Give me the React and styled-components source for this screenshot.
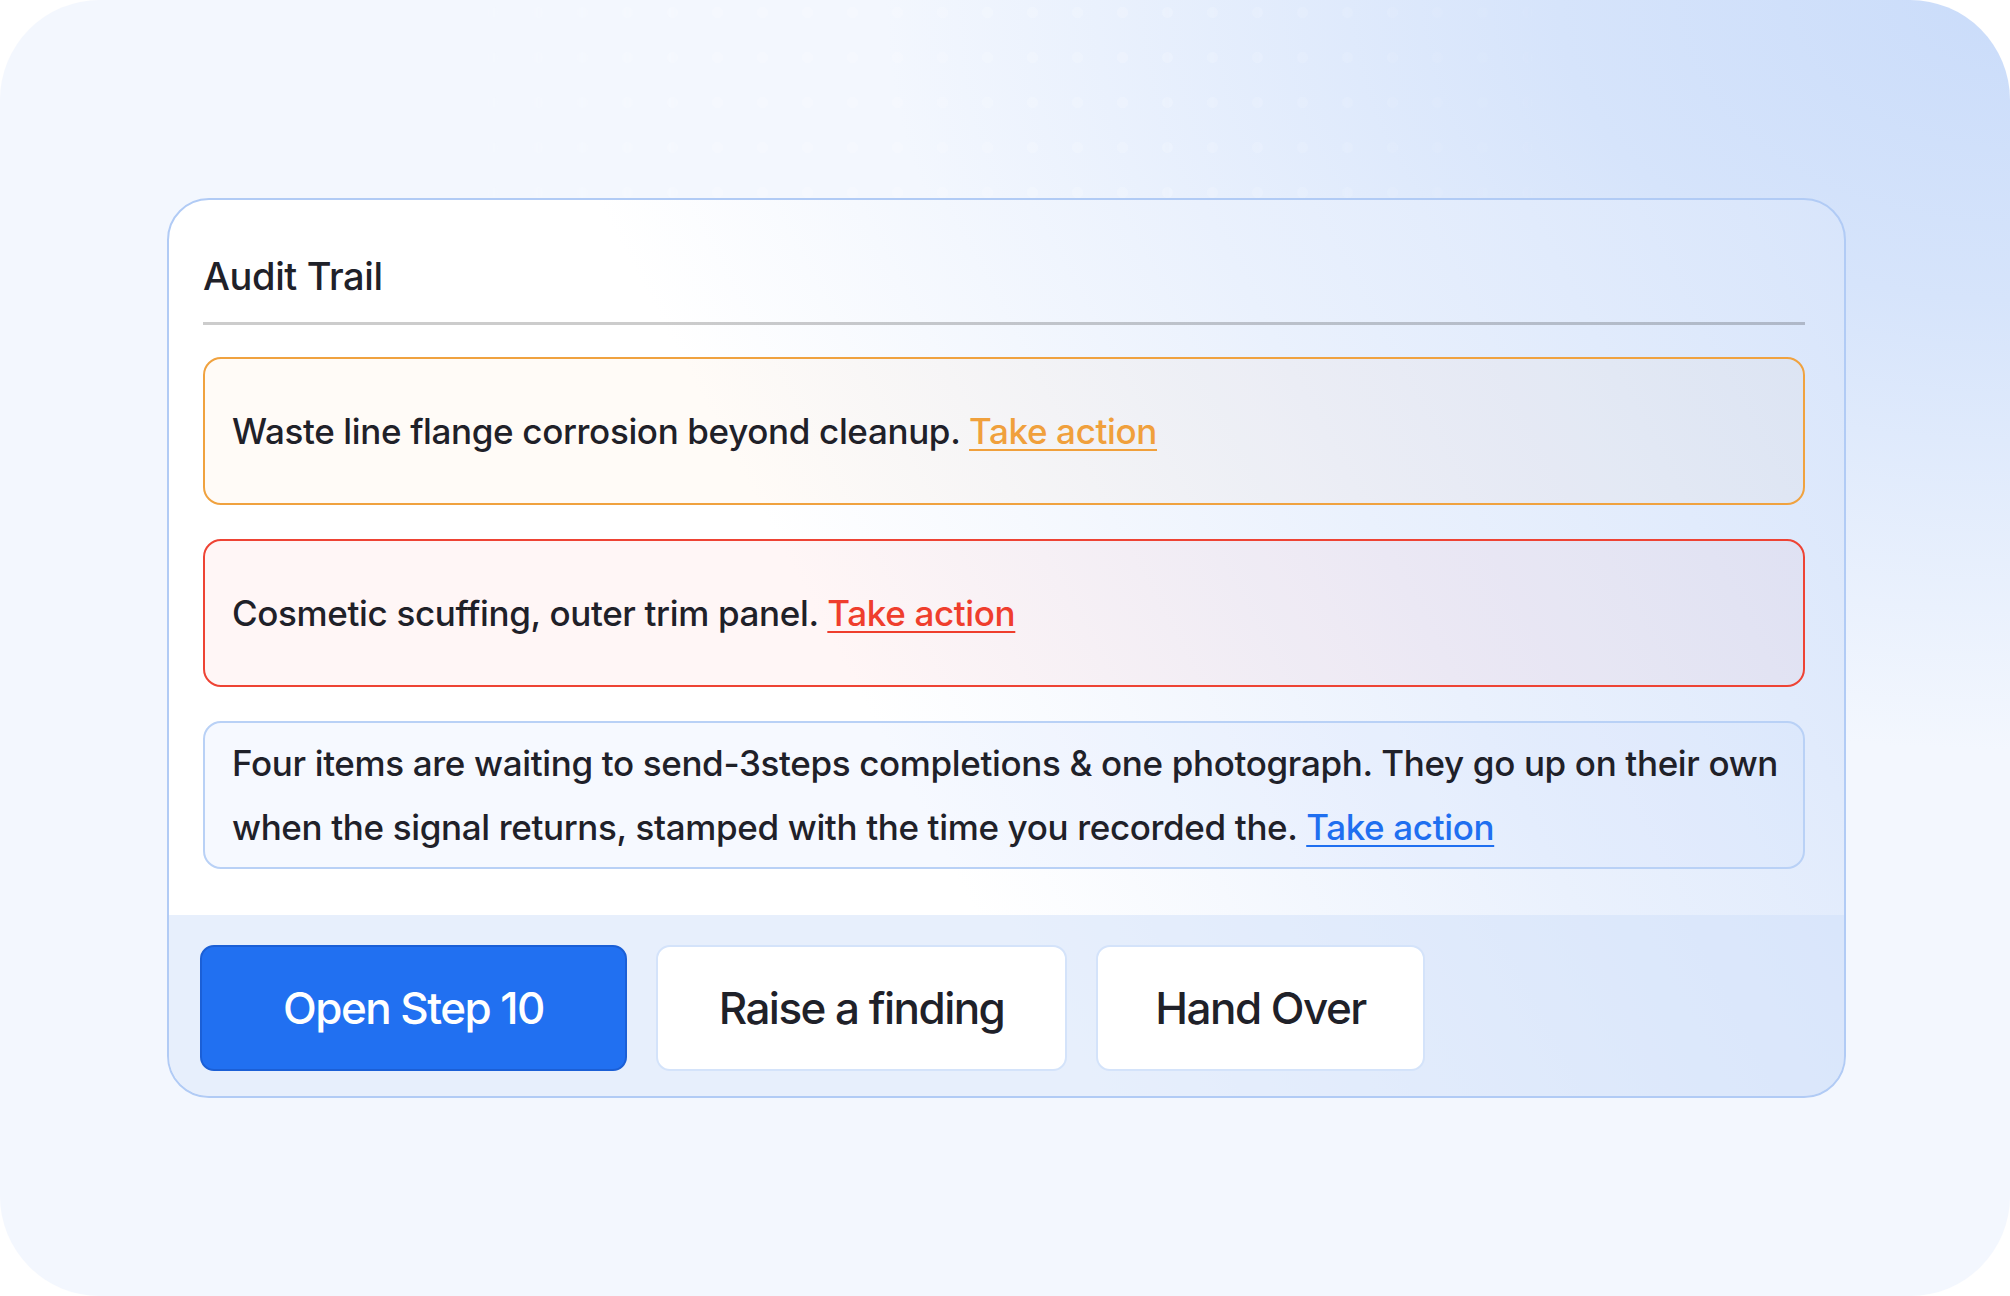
import React from "react";
import styled, { createGlobalStyle } from "styled-components";

const TONES = {
  warn: {
    line: "#f0a23f",
    link: "#f0a03c",
    tint: "rgba(252, 176, 90, 0.05)",
  },
  danger: {
    line: "#ee4334",
    link: "#ef3e2d",
    tint: "rgba(250, 110, 100, 0.06)",
  },
  info: {
    line: "#b9d1f6",
    link: "#1f6ff0",
    tint: "rgba(200, 220, 252, 0.16)",
  },
};

const notices = [
  {
    tone: "warn",
    text: "Waste line flange corrosion beyond cleanup.",
  },
  {
    tone: "danger",
    text: "Cosmetic scuffing, outer trim panel.",
  },
  {
    tone: "info",
    text:
      "Four items are waiting to send-3steps completions & one photograph. They go up on their own when the signal returns, stamped with the time you recorded the.",
  },
];

const actions = [
  { label: "Open Step 10", primary: true, width: 427 },
  { label: "Raise a finding", width: 411 },
  { label: "Hand Over", width: 329 },
];

function App() {
  return (
    <>
      <GlobalStyle />
      <Frame>
        <Card>
          <CardBody>
            <Title>Audit Trail</Title>
            <NoticeList>
              {notices.map((n) => (
                <Notice key={n.tone} $tone={n.tone}>
                  <NoticeText>
                    {n.text}{" "}
                    <ActionLink href="#" $tone={n.tone}>
                      Take action
                    </ActionLink>
                  </NoticeText>
                </Notice>
              ))}
            </NoticeList>
          </CardBody>
          <Footer>
            {actions.map((a) => (
              <ActionButton key={a.label} $primary={a.primary} $w={a.width}>
                {a.label}
              </ActionButton>
            ))}
          </Footer>
        </Card>
      </Frame>
    </>
  );
}

export default App;

const GlobalStyle = createGlobalStyle`
  * {
    box-sizing: border-box;
  }
  html, body {
    margin: 0;
    padding: 0;
    background: #ffffff;
  }
  body {
    font-family: Inter, "Noto Sans", "Liberation Sans", sans-serif;
    color: #1f2129;
  }
`;

const Frame = styled.div`
  position: relative;
  display: flex;
  align-items: center;
  justify-content: center;
  width: 2010px;
  height: 1296px;
  padding-left: 3px;
  border-radius: 100px;
  overflow: hidden;
  background:
    radial-gradient(ellipse 1500px 1000px at 100% 0%, #cadcfa 0%, #d6e4fb 30%, rgba(240, 245, 254, 0) 75%),
    #f3f7fe;

  /* faint dot texture along the top */
  &::before {
    content: "";
    position: absolute;
    left: 470px;
    top: 0;
    width: 1100px;
    height: 210px;
    background-image: radial-gradient(circle, rgba(255, 255, 255, 0.5) 5px, transparent 6px);
    background-size: 45px 45px;
    background-position: 0 -10px;
    -webkit-mask-image: linear-gradient(to right, transparent, #000 20%, #000 60%, transparent);
    mask-image: linear-gradient(to right, transparent, #000 20%, #000 60%, transparent);
    opacity: 0.35;
  }
`;

const Card = styled.div`
  position: relative;
  z-index: 1;
  display: flex;
  flex-direction: column;
  width: 1679px;
  border: 2px solid #b1cbf5;
  border-radius: 42px;
  overflow: hidden;
  background: linear-gradient(62deg, #ffffff 0%, #ffffff 42%, #eaf1fd 70%, #d8e5fb 100%);
`;

const CardBody = styled.div`
  display: flex;
  flex-direction: column;
  padding: 54px 39px 46px 34px;
`;

const Title = styled.h2`
  margin: 0 0 32px;
  padding-bottom: 22px;
  border-bottom: 3px solid rgba(0, 0, 0, 0.2);
  font-size: 38px;
  font-weight: 500;
  line-height: 1.2;
  letter-spacing: -0.01em;
  color: #1f2129;
`;

const NoticeList = styled.div`
  display: flex;
  flex-direction: column;
  gap: 34px;
`;

const Notice = styled.div`
  display: flex;
  align-items: center;
  min-height: 148px;
  padding: 8px 8px 8px 27px;
  border: 2px solid ${(p) => TONES[p.$tone].line};
  border-radius: 18px;
  background: ${(p) => TONES[p.$tone].tint};
`;

const NoticeText = styled.p`
  margin: 0;
  font-size: 35px;
  font-weight: 500;
  line-height: 64px;
  letter-spacing: -0.01em;
  color: #1f2129;
`;

const ActionLink = styled.a`
  color: ${(p) => TONES[p.$tone].link};
  text-decoration: underline;
  text-decoration-thickness: 2px;
  text-underline-offset: 5px;
`;

const Footer = styled.div`
  display: flex;
  gap: 29px;
  padding: 30px 34px 25px 31px;
  background: rgba(208, 224, 250, 0.5);
`;

const ActionButton = styled.button`
  display: flex;
  align-items: center;
  justify-content: center;
  width: ${(p) => p.$w}px;
  height: 126px;
  padding: 0;
  border: 2px solid ${(p) => (p.$primary ? "#1b5fd6" : "#d4e3fa")};
  border-radius: 14px;
  background: ${(p) => (p.$primary ? "#2170f1" : "#ffffff")};
  color: ${(p) => (p.$primary ? "#ffffff" : "#1f2129")};
  font-family: Inter, "Noto Sans", "Liberation Sans", sans-serif;
  font-size: 44px;
  font-weight: 500;
  letter-spacing: -0.035em;
  cursor: pointer;
`;
